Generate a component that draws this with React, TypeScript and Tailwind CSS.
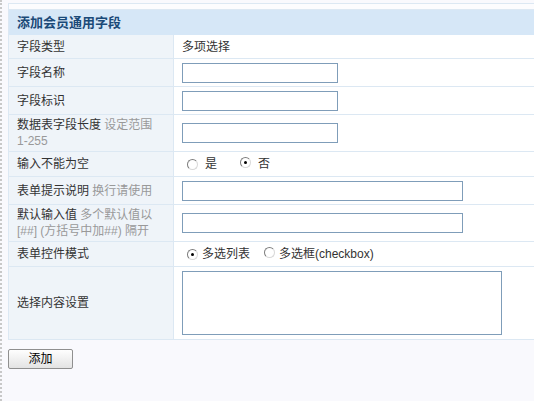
import type { ReactNode } from 'react'

const font = { fontFamily: '"Liberation Sans", "Noto Sans CJK SC", sans-serif' }

// classic inset radio circle
const Radio = ({ checked }: { checked?: boolean }) => (
  <span className="relative inline-block w-[11px] h-[11px] shrink-0 rounded-full border border-[#7d7d7d] border-r-[#d8d8d8] border-b-[#d8d8d8] bg-white">
    {checked && <span className="absolute left-[3px] top-[3px] w-[3px] h-[3px] rounded-full bg-black" />}
  </span>
)

const Row = ({ label, hint, h, children }: { label: string, hint?: ReactNode, h: string, children?: ReactNode }) => (
  <div className={`flex border-b border-[#dce8f3] ${h}`}>
    <div className="w-[165px] shrink-0 bg-[#eff4f9] border-r border-[#dce8f3] pl-[8px] pr-[6px] flex items-center leading-[16px] text-[#333]">
      <p>
        {label}
        {hint && <span className="text-[#999]"> {hint}</span>}
      </p>
    </div>
    <div className="flex-1 bg-white pl-[8px] flex items-center">{children}</div>
  </div>
)

const Input = ({ wide }: { wide?: boolean }) => (
  <input className={`${wide ? 'w-[281px]' : 'w-[156px]'} h-[20px] border border-[#7f9db9] bg-white outline-none`} />
)

export default function App() {
  return (
    <div className="min-h-[401px] bg-[#f9f9fd] text-[12px] border-l-2 border-dotted border-[#c8c8c8]" style={font}>
      <div className="pt-[3px] pl-[6px]">
        <div className="border-t border-l border-[#dce8f3] bg-[#fcfcfe] pt-[5px]">
          <div className="h-[26px] bg-[#d6e7f7] border-t border-[#dce8f3] flex items-center pl-[8px]">
            <h2 className="text-[13px] font-bold text-[#1b4a78]">添加会员通用字段</h2>
          </div>
          <Row label="字段类型" h="h-[24px]">
            <span className="text-[#333]">多项选择</span>
          </Row>
          <Row label="字段名称" h="h-[28px]"><Input /></Row>
          <Row label="字段标识" h="h-[28px]"><Input /></Row>
          <Row label="数据表字段长度" hint={<>设定范围 <span className="whitespace-nowrap">1-255</span></>} h="h-[37px]"><Input /></Row>
          <Row label="输入不能为空" h="h-[25px]">
            <div className="flex items-center pl-[5px] text-[#333]">
              <Radio />
              <span className="ml-[7px]">是</span>
              <span className="ml-[23px]"><Radio checked /></span>
              <span className="ml-[7px]">否</span>
            </div>
          </Row>
          <Row label="表单提示说明" hint="换行请使用" h="h-[28px]"><Input wide /></Row>
          <Row label="默认输入值" hint="多个默认值以 [##] (方括号中加##) 隔开" h="h-[37px]"><Input wide /></Row>
          <Row label="表单控件模式" h="h-[25px]">
            <div className="flex items-center pl-[5px] text-[#333]">
              <Radio checked />
              <span className="ml-[4px]">多选列表</span>
              <span className="ml-[14px]"><Radio /></span>
              <span className="ml-[4px]">多选框(checkbox)</span>
            </div>
          </Row>
          <Row label="选择内容设置" h="h-[73px]">
            <textarea className="w-[320px] h-[64px] border border-[#7f9db9] bg-white outline-none resize-none" />
          </Row>
        </div>
        <button className="mt-[9px] w-[65px] h-[20px] rounded-[2px] border border-[#8f8f8f] bg-gradient-to-b from-[#fefefe] to-[#e3e3e3] text-[12px] text-black">
          添加
        </button>
      </div>
    </div>
  )
}
